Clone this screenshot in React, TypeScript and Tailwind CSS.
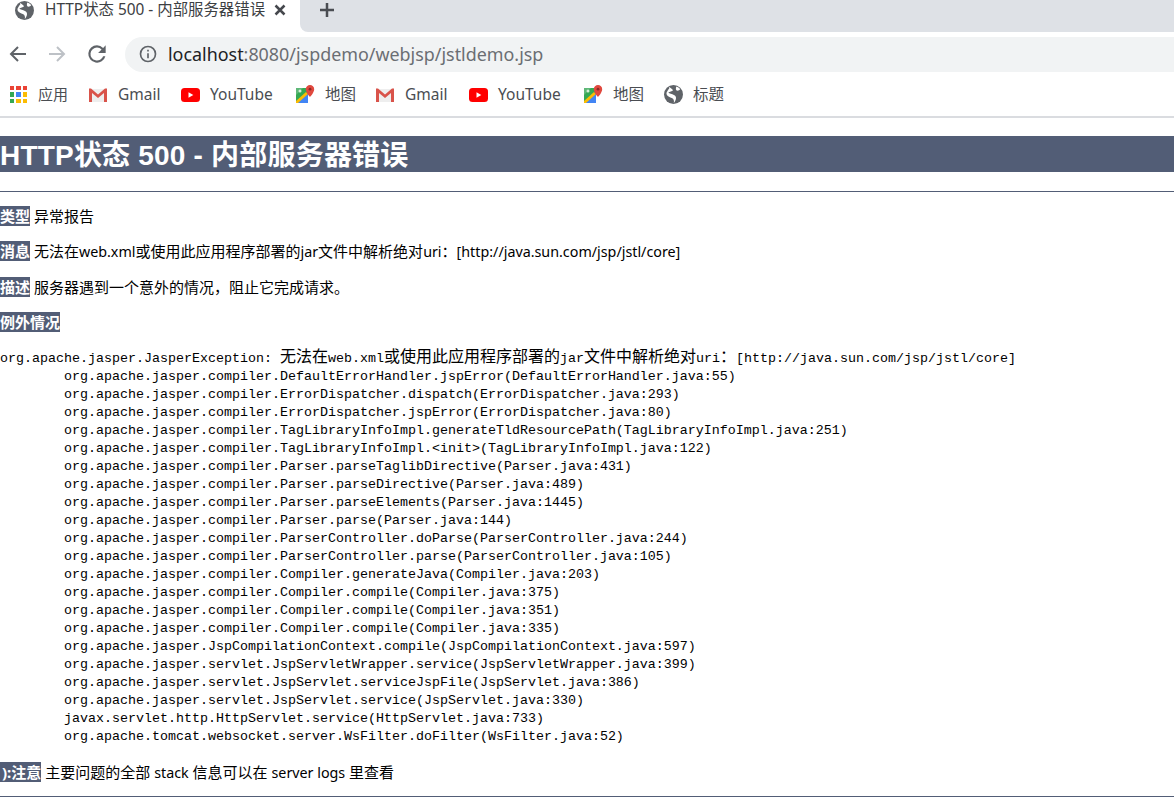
const trace: string[] = [
  'org.apache.jasper.compiler.DefaultErrorHandler.jspError(DefaultErrorHandler.java:55)',
  'org.apache.jasper.compiler.ErrorDispatcher.dispatch(ErrorDispatcher.java:293)',
  'org.apache.jasper.compiler.ErrorDispatcher.jspError(ErrorDispatcher.java:80)',
  'org.apache.jasper.compiler.TagLibraryInfoImpl.generateTldResourcePath(TagLibraryInfoImpl.java:251)',
  'org.apache.jasper.compiler.TagLibraryInfoImpl.<init>(TagLibraryInfoImpl.java:122)',
  'org.apache.jasper.compiler.Parser.parseTaglibDirective(Parser.java:431)',
  'org.apache.jasper.compiler.Parser.parseDirective(Parser.java:489)',
  'org.apache.jasper.compiler.Parser.parseElements(Parser.java:1445)',
  'org.apache.jasper.compiler.Parser.parse(Parser.java:144)',
  'org.apache.jasper.compiler.ParserController.doParse(ParserController.java:244)',
  'org.apache.jasper.compiler.ParserController.parse(ParserController.java:105)',
  'org.apache.jasper.compiler.Compiler.generateJava(Compiler.java:203)',
  'org.apache.jasper.compiler.Compiler.compile(Compiler.java:375)',
  'org.apache.jasper.compiler.Compiler.compile(Compiler.java:351)',
  'org.apache.jasper.compiler.Compiler.compile(Compiler.java:335)',
  'org.apache.jasper.JspCompilationContext.compile(JspCompilationContext.java:597)',
  'org.apache.jasper.servlet.JspServletWrapper.service(JspServletWrapper.java:399)',
  'org.apache.jasper.servlet.JspServlet.serviceJspFile(JspServlet.java:386)',
  'org.apache.jasper.servlet.JspServlet.service(JspServlet.java:330)',
  'javax.servlet.http.HttpServlet.service(HttpServlet.java:733)',
  'org.apache.tomcat.websocket.server.WsFilter.doFilter(WsFilter.java:52)',
]

function Globe({ className }: { className: string }) {
  return (
    <svg className={className} viewBox="0 0 20 20">
      <circle cx="10" cy="10" r="10" fill="#5f6368" />
      <path d="M5.500 1.800C7 3.500 8.500 4 9.500 5.500 8.500 7 6 7 4.500 8c1 1.500 4 1.500 6 2.500 2 1 2.500 2.500 2 4.500-.4 1.500-1.500 3-2.500 4.500 1-2 .5-3.500-.5-5-1.500-1.500-4-1.500-5.500-3-1.500-1.500-2-3-.5-5 .5-1 1.200-1.800 2-2.700z" fill="#ffffff" />
      <path d="M13 1.500c1.500.5 3 1.500 4 3-.5 1-1.500 1.500-3 1.500-1 0-1.500-1-1.500-2s.2-1.800.5-2.500z" fill="#ffffff" />
    </svg>
  )
}

function Apps() {
  const colors = ['#ea4335', '#ea4335', '#ea4335', '#34a853', '#4285f4', '#fbbc04', '#34a853', '#fbbc04', '#fbbc04']
  return (
    <span className="grid grid-cols-3 gap-[2px] w-[17px] h-[17px] shrink-0">
      {colors.map((c, i) => (
        <span key={i} className="block w-[4.330px] h-[4.330px]" style={{ backgroundColor: c }} />
      ))}
    </span>
  )
}

function GmailIcon() {
  return (
    <svg className="w-[20px] h-[16px] shrink-0" viewBox="0 0 20 16">
      <path d="M1 2h18v13H1z" fill="#eeeeee" />
      <path d="M1 1.500h2l7 6 7-6h2V15h-3V6l-6 5-6-5v9H1z" fill="#d9534a" />
    </svg>
  )
}

function YoutubeIcon() {
  return (
    <svg className="w-[19px] h-[14px] shrink-0" viewBox="0 0 19 14">
      <rect width="19" height="14" rx="3.500" fill="#ff0000" />
      <path d="M7.500 4.200v5.600L12.300 7z" fill="#ffffff" />
    </svg>
  )
}

function MapsIcon() {
  return (
    <svg className="w-[20px] h-[20px] shrink-0" viewBox="0 0 20 20">
      <path d="M1 3h12v15H1z" fill="#34a853" />
      <path d="M1 18 13 7v11z" fill="#4285f4" />
      <path d="M1 16 11 7l2 2L3 18H1z" fill="#fbbc04" />
      <path d="M1 3h7L1 10z" fill="#5fb878" />
      <circle cx="5" cy="6" r="1.500" fill="#d6efd8" />
      <path d="M15 0a4.200 4.200 0 0 0-4.200 4.200C10.800 7.500 15 12 15 12s4.200-4.500 4.200-7.800A4.200 4.200 0 0 0 15 0z" fill="#e0483e" />
      <circle cx="15" cy="4.200" r="1.400" fill="#8c2a24" />
    </svg>
  )
}

function Bookmark({ icon, label, width }: { icon: React.ReactNode; label: string; width: string }) {
  return (
    <div className={`flex items-center shrink-0 ${width}`}>
      <span className="flex justify-center w-[20px] mr-[10px]">{icon}</span>
      <span className="text-[15.500px] text-[#4a4d52]">{label}</span>
    </div>
  )
}

function Label({ children }: { children: React.ReactNode }) {
  return <b className="bg-[#525d76] text-white font-bold">{children}</b>
}

function Cjk({ children }: { children: React.ReactNode }) {
  return <span className="text-[16px] font-['Noto_Sans_CJK_SC',sans-serif]">{children}</span>
}

// latin runs in the message lines are a little smaller than the chinese
function Lat({ children }: { children: React.ReactNode }) {
  return <span className="text-[14.300px]">{children}</span>
}

export default function App() {
  return (
    <div className="w-[1174px] h-[797px] overflow-hidden bg-white font-['Noto_Sans','Noto_Sans_CJK_SC',sans-serif]">
      {/* tabs */}
      <div className="flex h-[32px] bg-white">
        <div className="flex items-center w-[300px] h-[32px] pb-[12px] pl-[15px] pr-[14px]">
          <Globe className="w-[19px] h-[19px] shrink-0" />
          <span className="ml-[11px] text-[15.400px] text-[#3c4043] whitespace-nowrap">HTTP状态 500 - 内部服务器错误</span>
          <svg className="ml-auto w-[12px] h-[12px]" viewBox="0 0 12 12" stroke="#45484d" strokeWidth="2.500">
            <path d="M1.500 1.500l9 9M10.500 1.500l-9 9" />
          </svg>
        </div>
        <div className="flex flex-1 items-center pl-[19px] pb-[12px] bg-[#dee1e6] rounded-bl-[8px]">
          <svg className="w-[16px] h-[16px]" viewBox="0 0 16 16" stroke="#4a4d52" strokeWidth="2.500">
            <path d="M8 1v14M1 8h14" />
          </svg>
        </div>
      </div>
      {/* address bar */}
      <div className="flex items-center h-[44px] bg-white pl-[9px]">
        <svg className="w-[18px] h-[18px]" viewBox="0 0 18 18" fill="none" stroke="#5f6368" strokeWidth="2">
          <path d="M17 9H2M9 2 2 9l7 7" />
        </svg>
        <svg className="ml-[21px] w-[18px] h-[18px]" viewBox="0 0 18 18" fill="none" stroke="#bdc1c6" strokeWidth="2">
          <path d="M1 9h15M9 2l7 7-7 7" />
        </svg>
        <svg className="ml-[18px] w-[26px] h-[26px]" viewBox="0 0 24 24" fill="#5f6368">
          <path d="M17.650 6.350A7.960 7.960 0 0 0 12 4a8 8 0 1 0 7.730 10h-2.080A6 6 0 1 1 12 6c1.660 0 3.140.690 4.220 1.780L13 11h7V4l-2.350 2.350z" />
        </svg>
        <div className="flex items-center ml-[15px] w-[1049px] h-[35px] rounded-l-full bg-[#f1f3f4] pl-[13px]">
          <svg className="w-[20px] h-[20px] shrink-0" viewBox="0 0 24 24" fill="#5f6368">
            <path d="M11 7h2v2h-2zm0 4h2v6h-2zm1-9a10 10 0 1 0 0 20 10 10 0 0 0 0-20zm0 18a8 8 0 1 1 0-16 8 8 0 0 1 0 16z" />
          </svg>
          <span className="ml-[10px] text-[17.900px] text-[#6b6e73] whitespace-nowrap">
            <span className="text-[#202124]">localhost</span>:8080/jspdemo/webjsp/jstldemo.jsp
          </span>
        </div>
      </div>
      {/* bookmarks */}
      <div className="flex items-center h-[37px] pl-[10px] pb-[3px] border-b-2 border-[#dadce0] box-content">
        <div className="flex items-center shrink-0 w-[78px]">
          <Apps />
          <span className="ml-[11px] text-[15px] text-[#4a4d52]">应用</span>
        </div>
        <Bookmark icon={<GmailIcon />} label="Gmail" width="w-[92px]" />
        <Bookmark icon={<YoutubeIcon />} label="YouTube" width="w-[115px]" />
        <Bookmark icon={<MapsIcon />} label="地图" width="w-[80px]" />
        <Bookmark icon={<GmailIcon />} label="Gmail" width="w-[93px]" />
        <Bookmark icon={<YoutubeIcon />} label="YouTube" width="w-[115px]" />
        <Bookmark icon={<MapsIcon />} label="地图" width="w-[80px]" />
        <Bookmark icon={<Globe className="w-[19px] h-[19px]" />} label="标题" width="w-[80px]" />
      </div>
      {/* page */}
      <div className="pt-[18px] text-[15px] leading-[18px] text-black">
        <h1 className="bg-[#525d76] text-white font-bold text-[28px] leading-[40px] h-[36px] whitespace-nowrap font-['Liberation_Sans','Noto_Sans_CJK_SC',sans-serif] tracking-[0.2px]">HTTP状态 500 - 内部服务器错误</h1>
        <div className="mt-[19px] h-px bg-[#525d76]" />
        <p className="mt-[15px]"><Label>类型</Label> 异常报告</p>
        <p className="mt-[17px]"><Label>消息</Label> 无法在<Lat>web.xml</Lat>或使用此应用程序部署的<Lat>jar</Lat>文件中解析绝对<Lat>uri</Lat>：<Lat>[http://java.sun.com/jsp/jstl/core]</Lat></p>
        <p className="mt-[17px]"><Label>描述</Label> 服务器遇到一个意外的情况，阻止它完成请求。</p>
        <p className="mt-[17px]"><Label>例外情况</Label></p>
        <div className="mt-[15px] font-['Liberation_Mono',monospace] text-[13.330px] leading-[18px] whitespace-pre">
          <div className="h-[22px]">org.apache.jasper.JasperException: <Cjk>无法在</Cjk>web.xml<Cjk>或使用此应用程序部署的</Cjk>jar<Cjk>文件中解析绝对</Cjk>uri<Cjk>：</Cjk>[http://java.sun.com/jsp/jstl/core]</div>
          {trace.map((line, i) => (
            <div key={i} className="pl-[64px]">{line}</div>
          ))}
        </div>
        <p className="mt-[17px] whitespace-nowrap"><b className="bg-[#525d76] text-white font-bold pl-[2px]">):注意</b> 主要问题的全部 <Lat>stack</Lat> 信息可以在 <Lat>server logs</Lat> 里查看</p>
        <div className="mt-[14px] h-px bg-[#525d76]" />
      </div>
    </div>
  )
}
